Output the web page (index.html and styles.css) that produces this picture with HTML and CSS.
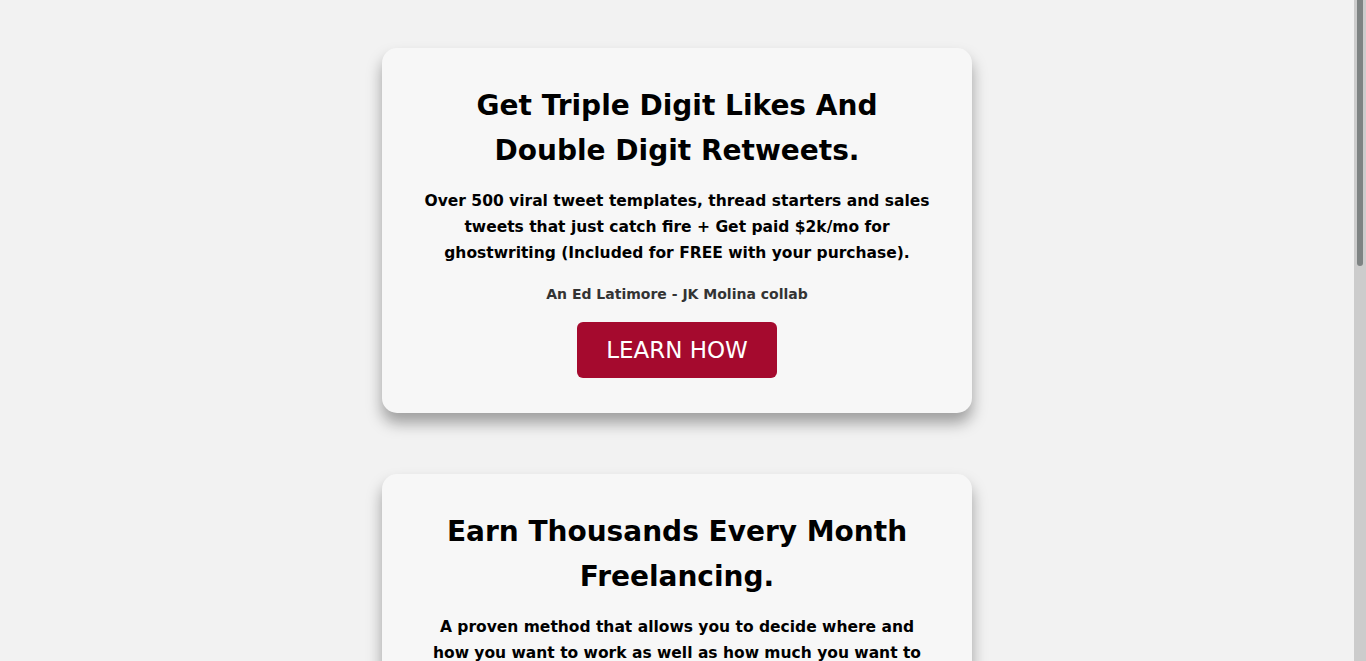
FILE: index.html
```html
<!DOCTYPE html>
<html lang="en">
<head>
<meta charset="utf-8">
<title>Offers</title>
<link rel="stylesheet" href="styles.css">
</head>
<body>
<main class="list">
  <section class="card">
    <h2 class="card-title">Get Triple Digit Likes And Double Digit Retweets.</h2>
    <p class="card-text">Over 500 viral tweet templates, thread starters and sales tweets that just catch fire + Get paid $2k/mo for ghostwriting (Included for FREE with your purchase).</p>
    <p class="card-note">An Ed Latimore - JK Molina collab</p>
    <a class="card-btn" href="#">LEARN HOW</a>
  </section>
  <section class="card">
    <h2 class="card-title">Earn Thousands Every Month Freelancing.</h2>
    <p class="card-text">A proven method that allows you to decide where and how you want to work as well as how much you want to earn every single month without a boss.</p>
    <p class="card-note">An Ed Latimore course</p>
    <a class="card-btn" href="#">LEARN HOW</a>
  </section>
</main>
<div class="scrollbar" aria-hidden="true"><div class="scrollbar-thumb"></div></div>
</body>
</html>
```
FILE: styles.css
```css
html { background: #f2f2f2; }
body {
  margin: 0;
  padding-right: 12px;
  background: #f2f2f2;
  font-family: "DejaVu Sans", "Liberation Sans", sans-serif;
  color: #000;
}
.list {
  display: flex;
  flex-direction: column;
  align-items: center;
  gap: 61px;
  padding: 48px 0 60px;
}
.card {
  box-sizing: border-box;
  width: 590px;
  background: #f7f7f7;
  border-radius: 15px;
  box-shadow: 0 10px 15px rgba(0, 0, 0, 0.35);
  padding: 35px 40px 35px;
  display: flex;
  flex-direction: column;
  align-items: center;
  text-align: center;
}
.card-title {
  margin: 0;
  font-size: 28px;
  line-height: 45px;
  font-weight: 700;
  padding: 0 20px;
}
.card-text {
  margin: 15px 0 0;
  font-size: 15.5px;
  line-height: 26px;
  font-weight: 600;
}
.card-note {
  margin: 17px 0 0;
  font-size: 14px;
  line-height: 22px;
  font-weight: 600;
  color: #333;
}
.card-btn {
  margin-top: 17px;
  width: 200px;
  height: 56px;
  display: flex;
  align-items: center;
  justify-content: center;
  background: #a50a2e;
  color: #fff;
  border-radius: 6px;
  text-decoration: none;
  font-size: 23px;
  font-weight: 400;
}
.scrollbar {
  position: fixed;
  top: 0;
  right: 0;
  width: 12px;
  height: 100%;
  background: #cccccc;
}
.scrollbar-thumb {
  margin-left: 3px;
  width: 6px;
  height: 266px;
  background: #7e8383;
  border-radius: 0 0 3px 3px;
}
```
